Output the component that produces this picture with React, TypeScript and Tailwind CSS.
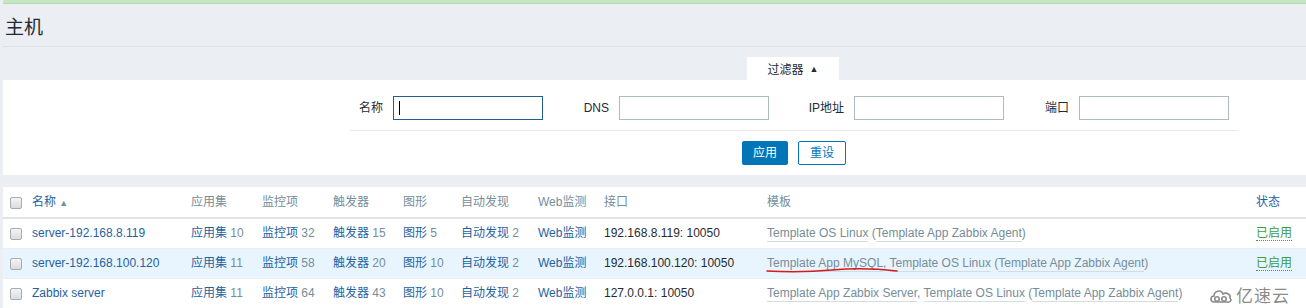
import React from "react";

const FONT = "font-[Liberation_Sans,Arial,Noto_Sans_CJK_SC,sans-serif]";

function Checkbox() {
  return (
    <span className="inline-block w-[12px] h-[12px] rounded-[2px] border border-[#a3adb2] bg-gradient-to-b from-[#f4f4f4] to-[#d9dcde] align-middle" />
  );
}

function Cnt({ label, n }: { label: string; n?: string }) {
  return (
    <span>
      <span className="text-[#1f62a0]">{label}</span>
      {n ? <span className="text-[#768d99]"> {n}</span> : null}
    </span>
  );
}

function T({ children }: { children: React.ReactNode }) {
  return <span className="text-[#768d99] border-b border-[#d5dcdf] pb-[1px]">{children}</span>;
}

type Row = {
  name: string;
  apps: string;
  items: string;
  trig: string;
  graphs: string;
  disc: string;
  iface: string;
  tpls: string[];
  parent: string;
  status: boolean;
  hl?: boolean;
};

const rows: Row[] = [
  { name: "server-192.168.8.119", apps: "10", items: "32", trig: "15", graphs: "5", disc: "2", iface: "192.168.8.119: 10050", tpls: ["Template OS Linux"], parent: "Template App Zabbix Agent", status: true },
  { name: "server-192.168.100.120", apps: "11", items: "58", trig: "20", graphs: "10", disc: "2", iface: "192.168.100.120: 10050", tpls: ["Template App MySQL", "Template OS Linux"], parent: "Template App Zabbix Agent", status: true, hl: true },
  { name: "Zabbix server", apps: "11", items: "64", trig: "43", graphs: "10", disc: "2", iface: "127.0.0.1: 10050", tpls: ["Template App Zabbix Server", "Template OS Linux"], parent: "Template App Zabbix Agent", status: false },
];

function Field({ label, w, focus }: { label: string; w: string; focus?: boolean }) {
  return (
    <div className="flex items-center">
      <div className={`${w} text-right pr-[10px] text-[#1f2c33]`}>{label}</div>
      <div
        className={`w-[150px] h-[24px] bg-white border ${focus ? "border-[#1f5f8c]" : "border-[#acbbc2]"} flex items-center pl-[5px]`}
      >
        {focus ? <span className="w-px h-[14px] bg-black" /> : null}
      </div>
    </div>
  );
}

export default function App() {
  return (
    <div className={`${FONT} w-[1306px] h-[308px] bg-[#ebeef2] text-[12px] text-[#1f2c33] overflow-hidden`}>
      <div className="pl-[3px]">
        <div className="h-[4px] bg-[#c4e6c3] border-b border-[#b2dbb0]" />
        <div className="h-[43px] border-b border-[#dce2e5] flex items-center pl-[2px] pt-[4px]">
          <h1 className="text-[19px] leading-none text-[#1f2c33] font-normal">主机</h1>
        </div>
        <div className="pt-[10px]">
          <div className="ml-[744px] w-[92px] h-[23px] bg-white flex items-center justify-center gap-[6px] pt-[2px] text-[#1f2c33]">
            <span>过滤器</span>
            <span className="text-[9px]">▲</span>
          </div>
          <div className="bg-white h-[95px] pl-[347px]">
            <div className="w-[888px] border-b border-[#e6eaec] pt-[16px] pb-[10px] flex">
              <Field label="名称" w="w-[43px]" focus />
              <Field label="DNS" w="w-[76px]" />
              <Field label="IP地址" w="w-[85px]" />
              <Field label="端口" w="w-[75px]" />
            </div>
            <div className="w-[888px] flex justify-center gap-[10px] pt-[10px]">
              <div className="h-[24px] px-[11px] bg-[#0275b8] text-white flex items-center rounded-[2px]">应用</div>
              <div className="h-[24px] px-[11px] bg-white text-[#0275b8] border border-[#0275b8] flex items-center rounded-[2px]">重设</div>
            </div>
          </div>
        </div>
        <div className="mt-[12px] bg-white relative">
          <table className="table-fixed border-collapse w-[1303px]">
            <colgroup>
              <col className="w-[29px]" />
              <col className="w-[159px]" />
              <col className="w-[71px]" />
              <col className="w-[71px]" />
              <col className="w-[70px]" />
              <col className="w-[58px]" />
              <col className="w-[77px]" />
              <col className="w-[66px]" />
              <col className="w-[163px]" />
              <col className="w-[489px]" />
              <col className="w-[50px]" />
            </colgroup>
            <thead>
              <tr className="h-[31px] border-b-2 border-[#dfe4e7] text-left">
                <th className="font-normal pl-[7px]"><Checkbox /></th>
                <th className="font-normal text-[#1f62a0]">名称 <span className="text-[#768d99] text-[9px]">▲</span></th>
                <th className="font-normal text-[#768d99]">应用集</th>
                <th className="font-normal text-[#768d99]">监控项</th>
                <th className="font-normal text-[#768d99]">触发器</th>
                <th className="font-normal text-[#768d99]">图形</th>
                <th className="font-normal text-[#768d99]">自动发现</th>
                <th className="font-normal text-[#768d99]">Web监测</th>
                <th className="font-normal text-[#768d99]">接口</th>
                <th className="font-normal text-[#768d99]">模板</th>
                <th className="font-normal text-[#1f62a0]">状态</th>
              </tr>
            </thead>
            <tbody>
              {rows.map((r) => (
                <tr key={r.name} className={`h-[30px] border-b border-[#ebeef2] ${r.hl ? "bg-[#e8f5ff]" : ""}`}>
                  <td className="pl-[7px]"><Checkbox /></td>
                  <td className="text-[#1f62a0] whitespace-nowrap">{r.name}</td>
                  <td className="whitespace-nowrap"><Cnt label="应用集" n={r.apps} /></td>
                  <td className="whitespace-nowrap"><Cnt label="监控项" n={r.items} /></td>
                  <td className="whitespace-nowrap"><Cnt label="触发器" n={r.trig} /></td>
                  <td className="whitespace-nowrap"><Cnt label="图形" n={r.graphs} /></td>
                  <td className="whitespace-nowrap"><Cnt label="自动发现" n={r.disc} /></td>
                  <td className="whitespace-nowrap"><Cnt label="Web监测" /></td>
                  <td className="whitespace-nowrap">{r.iface}</td>
                  <td className="whitespace-nowrap text-[#768d99]">
                    {r.tpls.map((t, i) => (
                      <React.Fragment key={t}>
                        <T>{t}</T>
                        {i < r.tpls.length - 1 ? ", " : ""}
                      </React.Fragment>
                    ))}{" "}
                    (<T>{r.parent}</T>)
                  </td>
                  <td className="whitespace-nowrap">
                    {r.status ? (
                      <span className="text-[#3f9a45] border-b border-dotted border-[#3f9a45]">已启用</span>
                    ) : null}
                  </td>
                </tr>
              ))}
            </tbody>
          </table>
          <svg className="absolute left-0 top-0 pointer-events-none" width="1303" height="121" viewBox="3 187 1303 121">
            <path d="M767 271 Q 800 273 832 270 T 897 271" stroke="#d41a1a" strokeWidth="1.6" fill="none" strokeLinecap="round" />
          </svg>
          <div className="absolute right-[14px] bottom-[4px] flex items-center gap-[3px] bg-white pl-[12px] pr-[2px] text-[#8c8c8c]">
            <svg width="24" height="16" viewBox="0 0 24 16" fill="none" stroke="#8c8c8c" strokeWidth="1.6">
              <path d="M5 14 C1 14 1 8 5 8 C5 3 12 1 14 6 C17 4 22 6 21 10 C23 12 21 15 18 14 Z" />
              <circle cx="8" cy="11" r="2.2" />
              <circle cx="15" cy="11" r="2.2" />
            </svg>
            <span className="text-[17px] leading-none tracking-[1px]">亿速云</span>
          </div>
        </div>
      </div>
    </div>
  );
}
